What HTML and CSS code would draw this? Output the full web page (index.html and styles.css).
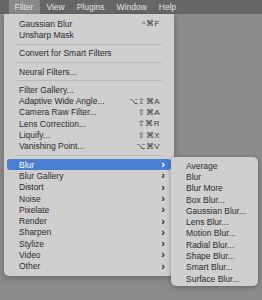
FILE: index.html
```html
<!DOCTYPE html>
<html lang="en">
<head>
  <meta charset="UTF-8" />
  <title>Filter menu</title>
  <link rel="stylesheet" href="styles.css">
</head>
<body>

  <div class="menubar">
    <span class="bar-item active">Filter</span>
    <span class="bar-item">View</span>
    <span class="bar-item">Plugins</span>
    <span class="bar-item">Window</span>
    <span class="bar-item">Help</span>
  </div>

  <!-- Filter dropdown -->
  <div class="menu main-menu">
    <div class="row"><span>Gaussian Blur</span><span class="key">^⌘F</span></div>
    <div class="row"><span>Unsharp Mask</span></div>
    <div class="sep"></div>
    <div class="row"><span>Convert for Smart Filters</span></div>
    <div class="sep"></div>
    <div class="row"><span>Neural Filters...</span></div>
    <div class="sep"></div>
    <div class="row"><span>Filter Gallery...</span></div>
    <div class="row"><span>Adaptive Wide Angle...</span><span class="key">⌥⇧⌘A</span></div>
    <div class="row"><span>Camera Raw Filter...</span><span class="key">⇧⌘A</span></div>
    <div class="row"><span>Lens Correction...</span><span class="key">⇧⌘R</span></div>
    <div class="row"><span>Liquify...</span><span class="key">⇧⌘X</span></div>
    <div class="row"><span>Vanishing Point...</span><span class="key">⌥⌘V</span></div>
    <div class="sep"></div>
    <div class="row sub selected"><span>Blur</span><span class="chev">›</span></div>
    <div class="row sub"><span>Blur Gallery</span><span class="chev">›</span></div>
    <div class="row sub"><span>Distort</span><span class="chev">›</span></div>
    <div class="row sub"><span>Noise</span><span class="chev">›</span></div>
    <div class="row sub"><span>Pixelate</span><span class="chev">›</span></div>
    <div class="row sub"><span>Render</span><span class="chev">›</span></div>
    <div class="row sub"><span>Sharpen</span><span class="chev">›</span></div>
    <div class="row sub"><span>Stylize</span><span class="chev">›</span></div>
    <div class="row sub"><span>Video</span><span class="chev">›</span></div>
    <div class="row sub"><span>Other</span><span class="chev">›</span></div>
  </div>

  <!-- Blur submenu -->
  <div class="menu sub-menu">
    <div class="row"><span>Average</span></div>
    <div class="row"><span>Blur</span></div>
    <div class="row"><span>Blur More</span></div>
    <div class="row"><span>Box Blur...</span></div>
    <div class="row"><span>Gaussian Blur...</span></div>
    <div class="row"><span>Lens Blur...</span></div>
    <div class="row"><span>Motion Blur...</span></div>
    <div class="row"><span>Radial Blur...</span></div>
    <div class="row"><span>Shape Blur...</span></div>
    <div class="row"><span>Smart Blur...</span></div>
    <div class="row"><span>Surface Blur...</span></div>
  </div>

</body>
</html>
```

FILE: styles.css
```css
:root {
  --desk: #8b8b8b;
  --bar: #666666;
  --panel: #cfcfcf;
  --text: #2b2b2b;
  --sep: #b9b9b9;
  --select: #4a7ed0;
}

* {
  box-sizing: border-box;
  margin: 0;
  padding: 0;
}

body {
  background: var(--desk);
  font-family: "Liberation Sans", Arial, sans-serif;
  font-size: 8.5px;
  color: var(--text);
  width: 262px;
  height: 300px;
  overflow: hidden;
  position: relative;
}

.menubar {
  height: 14px;
  background: var(--bar);
  display: flex;
  align-items: stretch;
  padding-left: 9px;
  gap: 1px;
}

.bar-item {
  color: #e2e2e2;
  display: flex;
  align-items: center;
  padding: 0 5.5px;
}

.bar-item.active {
  background: #898989;
  padding: 0 6.5px 0 5.5px;
}

.menu {
  position: absolute;
  background: var(--panel);
  border-radius: 0 0 5px 5px;
  box-shadow: 0 2px 6px rgba(0, 0, 0, 0.25);
}

.main-menu {
  top: 14px;
  left: 4px;
  width: 170px;
  padding: 4px 3px 4px;
}

.sub-menu {
  top: 157px;
  left: 171px;
  width: 87px;
  padding: 3px 3px 2px;
  border-radius: 5px;
  box-shadow: 0 1px 5px rgba(0, 0, 0, 0.3);
}

.row {
  height: 11.3px;
  display: flex;
  align-items: center;
  justify-content: space-between;
  padding: 0 6px 0 12px;
  border-radius: 3px;
  white-space: nowrap;
}

.key {
  font-size: 8px;
  letter-spacing: 0.5px;
  color: #3a3a3a;
  padding-right: 5px;
}

.chev {
  font-size: 11px;
  line-height: 1;
  font-weight: bold;
}

.row.selected {
  background: var(--select);
  color: #fff;
}

.sep {
  height: 1px;
  background: var(--sep);
  margin: 3px 9px 3px 9px;
}
```
